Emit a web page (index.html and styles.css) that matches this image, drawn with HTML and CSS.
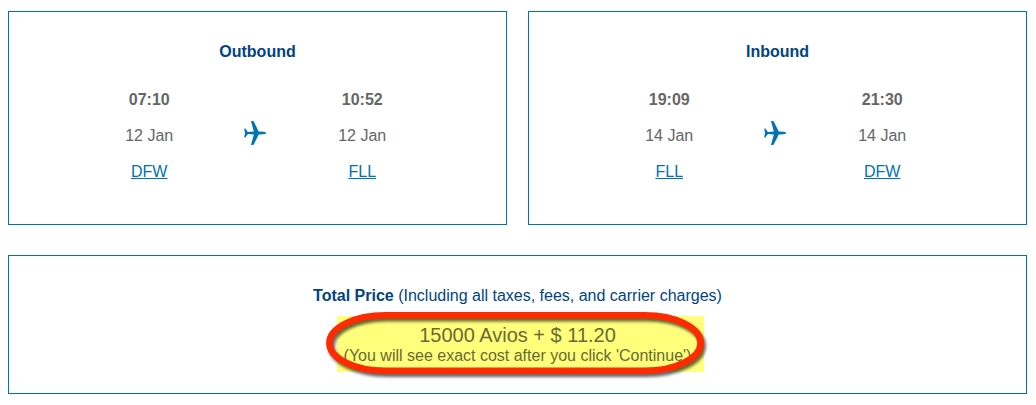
FILE: index.html
```
<!DOCTYPE html>
<html lang="en">
<head>
  <meta charset="UTF-8" />
  <meta name="viewport" content="width=device-width, initial-scale=1" />
  <title>Flight summary</title>
  <link rel="stylesheet" href="styles.css">
</head>
<body>
  <svg class="sprite" aria-hidden="true">
    <symbol id="plane" viewBox="0 0 24 26">
      <path d="M1.2 8.6h1.1l2.6 3.3 5.9-.5L8 1h1.9q.7 0 1 .7l4.8 9.8 4.8.3q2.8.3 2.8 1.2t-2.8 1.2l-4.8.3-4.8 9.8q-.3.7-1 .7H8l2.8-10.4-5.9-.5-2.6 3.3H1.2L2 13z" />
    </symbol>
  </svg>

  <main>
    <div class="flights">
      <section class="box flight">
        <h2>Outbound</h2>
        <div class="route">
          <div class="stop">
            <p class="time">07:10</p>
            <p>12 Jan</p>
            <p><a href="#">DFW</a></p>
          </div>
          <svg class="plane"><use href="#plane" /></svg>
          <div class="stop">
            <p class="time">10:52</p>
            <p>12 Jan</p>
            <p><a href="#">FLL</a></p>
          </div>
        </div>
      </section>

      <section class="box flight">
        <h2>Inbound</h2>
        <div class="route">
          <div class="stop">
            <p class="time">19:09</p>
            <p>14 Jan</p>
            <p><a href="#">FLL</a></p>
          </div>
          <svg class="plane"><use href="#plane" /></svg>
          <div class="stop">
            <p class="time">21:30</p>
            <p>14 Jan</p>
            <p><a href="#">DFW</a></p>
          </div>
        </div>
      </section>
    </div>

    <section class="box total">
      <p class="total-title"><strong>Total Price</strong> (Including all taxes, fees, and carrier charges)</p>
      <div class="price">
        <p class="amount">15000 Avios + $ 11.20</p>
        <p class="note">(You will see exact cost after you click 'Continue')</p>
        <svg class="ring" viewBox="0 0 378 62">
          <rect x="3.4" y="3.3" width="371.2" height="55.4" rx="56" ry="27.7" />
        </svg>
      </div>
    </section>
  </main>
</body>
</html>
```
FILE: styles.css
```
* {
  margin: 0;
  padding: 0;
  box-sizing: border-box;
}

body {
  background: #fff;
  color: #666;
  font-family: "Liberation Sans", Arial, sans-serif;
  font-size: 16px;
}

.sprite {
  display: none;
}

main {
  width: 1019px;
  margin: 11px 0 0 8px;
}

.box {
  border: 1px solid #0073b1;
  text-align: center;
}

/* Flights */
.flights {
  display: grid;
  grid-template-columns: 1fr 1fr;
  gap: 21px;
  margin-bottom: 30px;
}

.flight {
  height: 214px;
  padding-top: 22px;
}

.flight h2 {
  color: #004481;
  font-size: 16px;
  line-height: 36px;
}

.route {
  display: grid;
  grid-template-columns: repeat(3, 106.5px);
  justify-items: center;
  margin: 12px 0 0 87px;
  line-height: 36px;
}

.time {
  font-weight: bold;
}

.route a {
  color: #0073b1;
  text-decoration: underline;
}

.plane {
  width: 24px;
  height: 26px;
  margin: 38.4px 2px 0 0;
  fill: #0073b1;
}

/* Total price */
.total {
  height: 139px;
  padding-top: 30px;
}

.total-title {
  color: #004481;
  line-height: 20px;
}

.price {
  position: relative;
  width: 367px;
  height: 56px;
  margin: 10px auto 0 328px;
  padding: 9px 6px 0 0;
  background: #ffff7b;
  color: #6a6a34;
}

.amount {
  font-size: 20px;
  line-height: 21px;
}

.note {
  line-height: 20px;
}

/* marker around the price */
.ring {
  position: absolute;
  top: -4px;
  left: -11px;
  width: 378px;
  height: 62px;
  overflow: visible;
  fill: none;
  stroke: #ff2a00;
  stroke-width: 6.6;
  filter: drop-shadow(2px 3px 1.5px rgba(0, 0, 0, 0.6));
}
```
